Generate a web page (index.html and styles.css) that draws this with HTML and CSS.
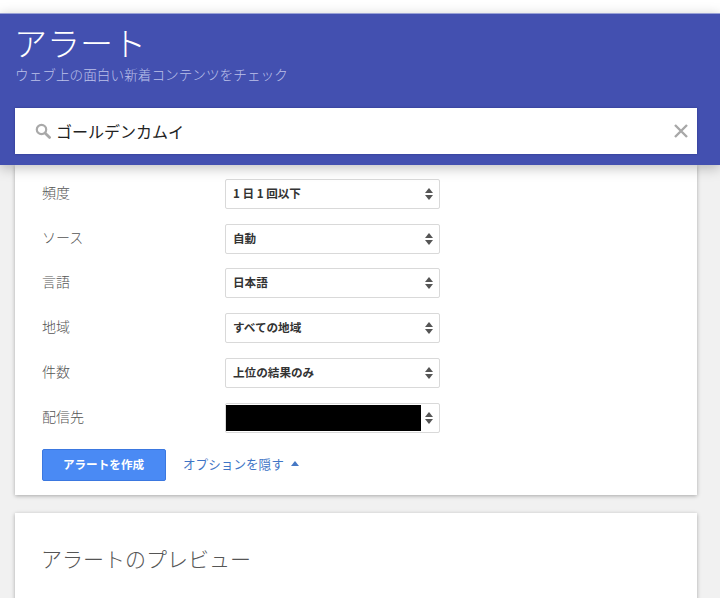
FILE: index.html
```html
<!DOCTYPE html>
<html lang="ja">
<head>
<meta charset="utf-8">
<title>アラート</title>
<link rel="stylesheet" href="styles.css">
</head>
<body>
<div class="topbar"></div>
<header class="header">
  <h1 class="title">アラート</h1>
  <p class="subtitle">ウェブ上の面白い新着コンテンツをチェック</p>
  <div class="search">
    <svg class="search-icon" width="16" height="16" viewBox="0 0 16 16"><circle cx="6.5" cy="6.5" r="4.7" fill="none" stroke="#a9a9a9" stroke-width="2.2"/><path d="M10 10l4.6 4.4" stroke="#a9a9a9" stroke-width="2.8" stroke-linecap="round"/></svg>
    <span class="query">ゴールデンカムイ</span>
    <svg class="clear-icon" width="14" height="14" viewBox="0 0 14 14"><path d="M1 1l12 12M13 1L1 13" stroke="#a8a8a8" stroke-width="2.4"/></svg>
  </div>
</header>
<main class="content">
  <section class="card options">
    <div class="row"><span class="label">頻度</span><div class="select"><span class="value">1 日 1 回以下</span><span class="updown"></span></div></div>
    <div class="row"><span class="label">ソース</span><div class="select"><span class="value">自動</span><span class="updown"></span></div></div>
    <div class="row"><span class="label">言語</span><div class="select"><span class="value">日本語</span><span class="updown"></span></div></div>
    <div class="row"><span class="label">地域</span><div class="select"><span class="value">すべての地域</span><span class="updown"></span></div></div>
    <div class="row"><span class="label">件数</span><div class="select"><span class="value">上位の結果のみ</span><span class="updown"></span></div></div>
    <div class="row"><span class="label">配信先</span><div class="select redacted-select"><span class="redacted"></span><span class="updown"></span></div></div>
    <div class="actions">
      <button class="create">アラートを作成</button>
      <a class="toggle">オプションを隠す<span class="caret"></span></a>
    </div>
  </section>
  <section class="card preview">
    <h2 class="preview-title">アラートのプレビュー</h2>
  </section>
</main>
</body>
</html>
```
FILE: styles.css
```css
* { box-sizing: border-box; }
html, body { margin: 0; height: 598px; overflow: hidden; }
body {
  background: #f1f1f1;
  font-family: "Noto Sans CJK JP", "Roboto", sans-serif;
  color: #333;
}
.topbar { height: 13px; background: #fff; }
.header {
  position: relative;
  z-index: 2;
  height: 152px;
  background: #4350b0;
  border-top: 1px solid #9aa2d6;
  padding: 0 23px 0 15px;
  box-shadow: 0 3px 12px rgba(0,0,0,.25);
}
.title {
  margin: 0 0 0 -1px;
  padding-top: 6px;
  height: 50px;
  font-size: 33px;
  line-height: 44px;
  font-weight: 300;
  color: #fff;
}
.subtitle {
  margin: 0;
  height: 44px;
  font-size: 13.65px;
  line-height: 21px;
  font-weight: 300;
  color: #bcc1ea;
}
.search {
  display: flex;
  align-items: center;
  height: 46px;
  background: #fff;
  padding: 0 9px 0 20px;
  box-shadow: 0 0 2px rgba(30,40,110,.6);
}
.search-icon { flex: none; margin-right: 5px; }
.query { flex: 1; font-size: 16px; font-weight: 400; color: #222; }
.clear-icon { flex: none; }
.content { padding: 0 23px 0 15px; }
.card {
  background: #fff;
  box-shadow: 0 1px 4px rgba(0,0,0,.3);
}
.options { height: 330px; padding: 14px 27px 0; }
.row {
  display: flex;
  align-items: flex-start;
  height: 44.72px;
}
.label {
  width: 183px;
  font-size: 14px;
  line-height: 27px;
  font-weight: 300;
  color: #555;
}
.select {
  display: flex;
  align-items: center;
  width: 215px;
  height: 30px;
  padding: 0 5px 0 7px;
  background: #fff;
  border: 1px solid #d9d9d9;
  border-radius: 2px;
}
.value { flex: 1; padding-bottom: 2px; font-size: 11.6px; font-weight: 700; color: #333; }
.redacted-select { padding: 0 5px 0 0; }
.redacted { flex: 1; height: 26px; margin-right: 4px; background: #000; }
.updown {
  position: relative;
  flex: none;
  width: 9px;
  height: 12px;
}
.updown::before, .updown::after {
  content: "";
  position: absolute;
  left: 0;
  border-left: 4.5px solid transparent;
  border-right: 4.5px solid transparent;
}
.updown::before { top: 0; border-bottom: 5px solid #555; }
.updown::after { bottom: 0; border-top: 5px solid #555; }
.actions { display: flex; align-items: center; margin-top: 1.5px; }
.create {
  width: 124px;
  height: 32px;
  padding: 0 1px 2px 0;
  background: #4a8af4;
  border: 1px solid #3b78e0;
  border-radius: 2px;
  font: 700 11.6px "Noto Sans CJK JP", sans-serif;
  color: #fff;
}
.toggle {
  display: flex;
  align-items: center;
  margin-left: 17px;
  padding-bottom: 2px;
  font-size: 12.6px;
  font-weight: 400;
  color: #3f75c6;
}
.caret {
  margin-left: 7px;
  border-left: 4.5px solid transparent;
  border-right: 4.5px solid transparent;
  border-bottom: 5px solid #4678c4;
}
.preview { height: 120px; margin-top: 18px; padding: 27px 26px 0; }
.preview-title {
  margin: 0;
  font-size: 21px;
  line-height: 36px;
  font-weight: 300;
  color: #555;
}
```
